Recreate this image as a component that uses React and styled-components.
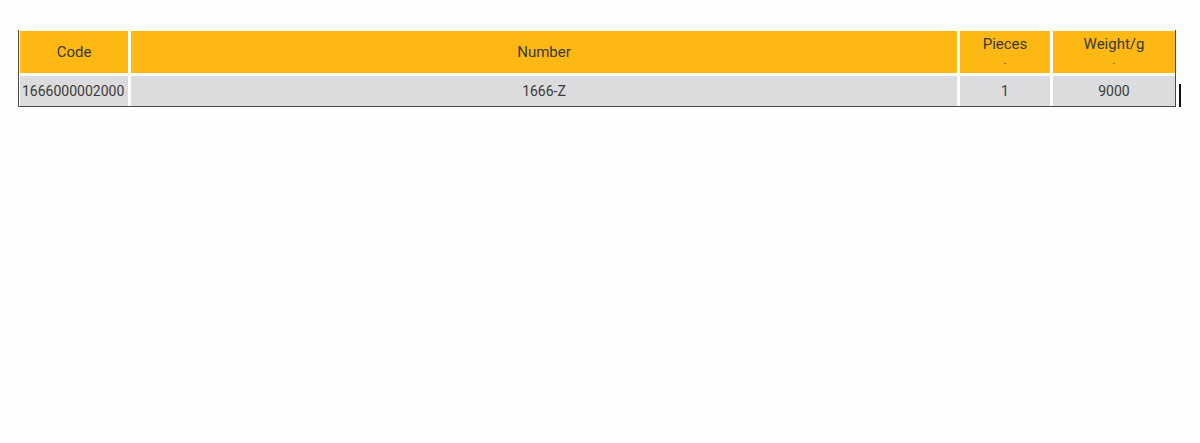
import React from 'react';
import styled, { createGlobalStyle } from 'styled-components';

const columns = [
    { key: 'code', label: 'Code', width: '108px' },
    { key: 'number', label: 'Number', width: '826px' },
    { key: 'pieces', label: 'Pieces', width: '90px', dot: true },
    { key: 'weight', label: 'Weight/g', width: '122px', dot: true },
];

const rows = [
    { code: '1666000002000', number: '1666-Z', pieces: '1', weight: '9000' },
];

export default function App() {
    const template = columns.map(c => c.width).join(' ');

    return (
        <>
            <GlobalStyle />
            <Page>
                <Table $cols={template}>
                    {columns.map(col => (
                        <HeadCell key={col.key}>
                            <span>{col.label}</span>
                            {col.dot && <Dot>.</Dot>}
                        </HeadCell>
                    ))}
                    {rows.map((row, i) =>
                        columns.map(col => (
                            <Cell key={i + col.key} $align={col.key === 'code' ? 'left' : 'center'}>
                                {row[col.key]}
                            </Cell>
                        ))
                    )}
                </Table>
                <Caret />
            </Page>
        </>
    );
}

const GlobalStyle = createGlobalStyle`
    body {
        margin: 0;
        background: #fefefe;
        font-family: Roboto, "Liberation Sans", sans-serif;
    }
`;

const Page = styled.div`
    display: flex;
    align-items: flex-end;
    gap: 3px;
    padding: 30px 0 0 18px;
`;

const Table = styled.div`
    display: grid;
    grid-template-columns: ${props => props.$cols};
    grid-template-rows: 42px 30px;
    column-gap: 3px;
    row-gap: 3px;
    padding: 1px 0 0 1px;
    border-left: 1px solid #4a4a4a;
    border-right: 1px solid #4a4a4a;
    border-bottom: 1px solid #4a4a4a;
    background: #fff;
`;

const HeadCell = styled.div`
    background: #fdb813;
    color: #3a3a3a;
    font-size: 15px;
    line-height: 18px;
    display: flex;
    flex-direction: column;
    align-items: center;
    justify-content: center;
`;

const Dot = styled.span`
    font-size: 11px;
    line-height: 16px;
`;

const Cell = styled.div`
    background: #dcdcde;
    color: #3a3a3a;
    font-size: 14px;
    display: flex;
    align-items: center;
    justify-content: ${props => (props.$align === 'left' ? 'flex-start' : 'center')};
    padding: 0 2px;
`;

const Caret = styled.div`
    width: 2px;
    height: 24px;
    background: #111;
    margin-bottom: -1px;
`;
